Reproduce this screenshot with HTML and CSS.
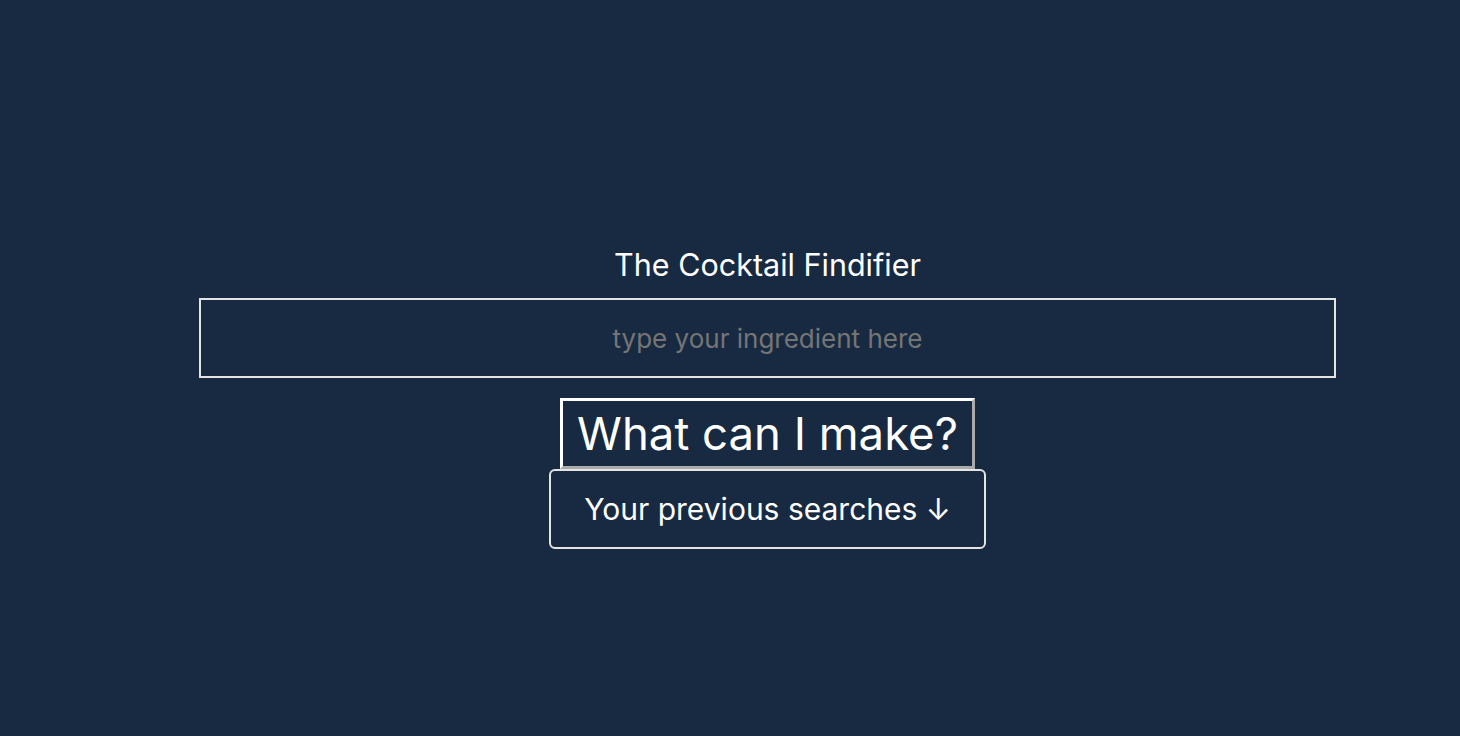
FILE: index.html
```html
<!DOCTYPE html>
<html>
<head>
<meta charset="utf-8">
<link rel="stylesheet" href="styles.css">
</head>
<body>
<main class="app">
  <h1 class="title">The Cocktail Findifier</h1>
  <input class="search" type="text" placeholder="type your ingredient here">
  <button class="make">What can I make?</button>
  <button class="history">Your previous searches ↓</button>
</main>
</body>
</html>
```

FILE: styles.css
```css
html, body {
  margin: 0;
  padding: 0;
  background: #182a42;
  height: 100%;
}
body {
  font-family: Inter, "Noto Sans", sans-serif;
  color: #fff;
}
.app {
  width: 1137px;
  margin-left: 199px;
  padding-top: 244px;
  display: flex;
  flex-direction: column;
  align-items: center;
}
.title {
  margin: 0;
  font-size: 30.5px;
  font-weight: 400;
  line-height: 42px;
  height: 54px;
}
.search {
  box-sizing: border-box;
  width: 100%;
  height: 80px;
  border: 2px solid #e4e4e4;
  background: transparent;
  color: #fff;
  font-family: inherit;
  font-size: 26px;
  text-align: center;
  outline: none;
  margin: 0;
}
.search::placeholder {
  color: #757575;
}
.make {
  box-sizing: border-box;
  margin-top: 20px;
  height: 71px;
  padding: 0 14px;
  background: transparent;
  color: #fff;
  font-family: inherit;
  font-size: 45.5px;
  border: 3px solid;
  border-color: #fff #aaa #aaa #fff;
}
.history {
  box-sizing: border-box;
  height: 80px;
  padding: 0 33px;
  background: transparent;
  color: #fff;
  font-family: inherit;
  font-size: 30px;
  border: 2px solid #e4e4e4;
  border-radius: 6px;
}
```
